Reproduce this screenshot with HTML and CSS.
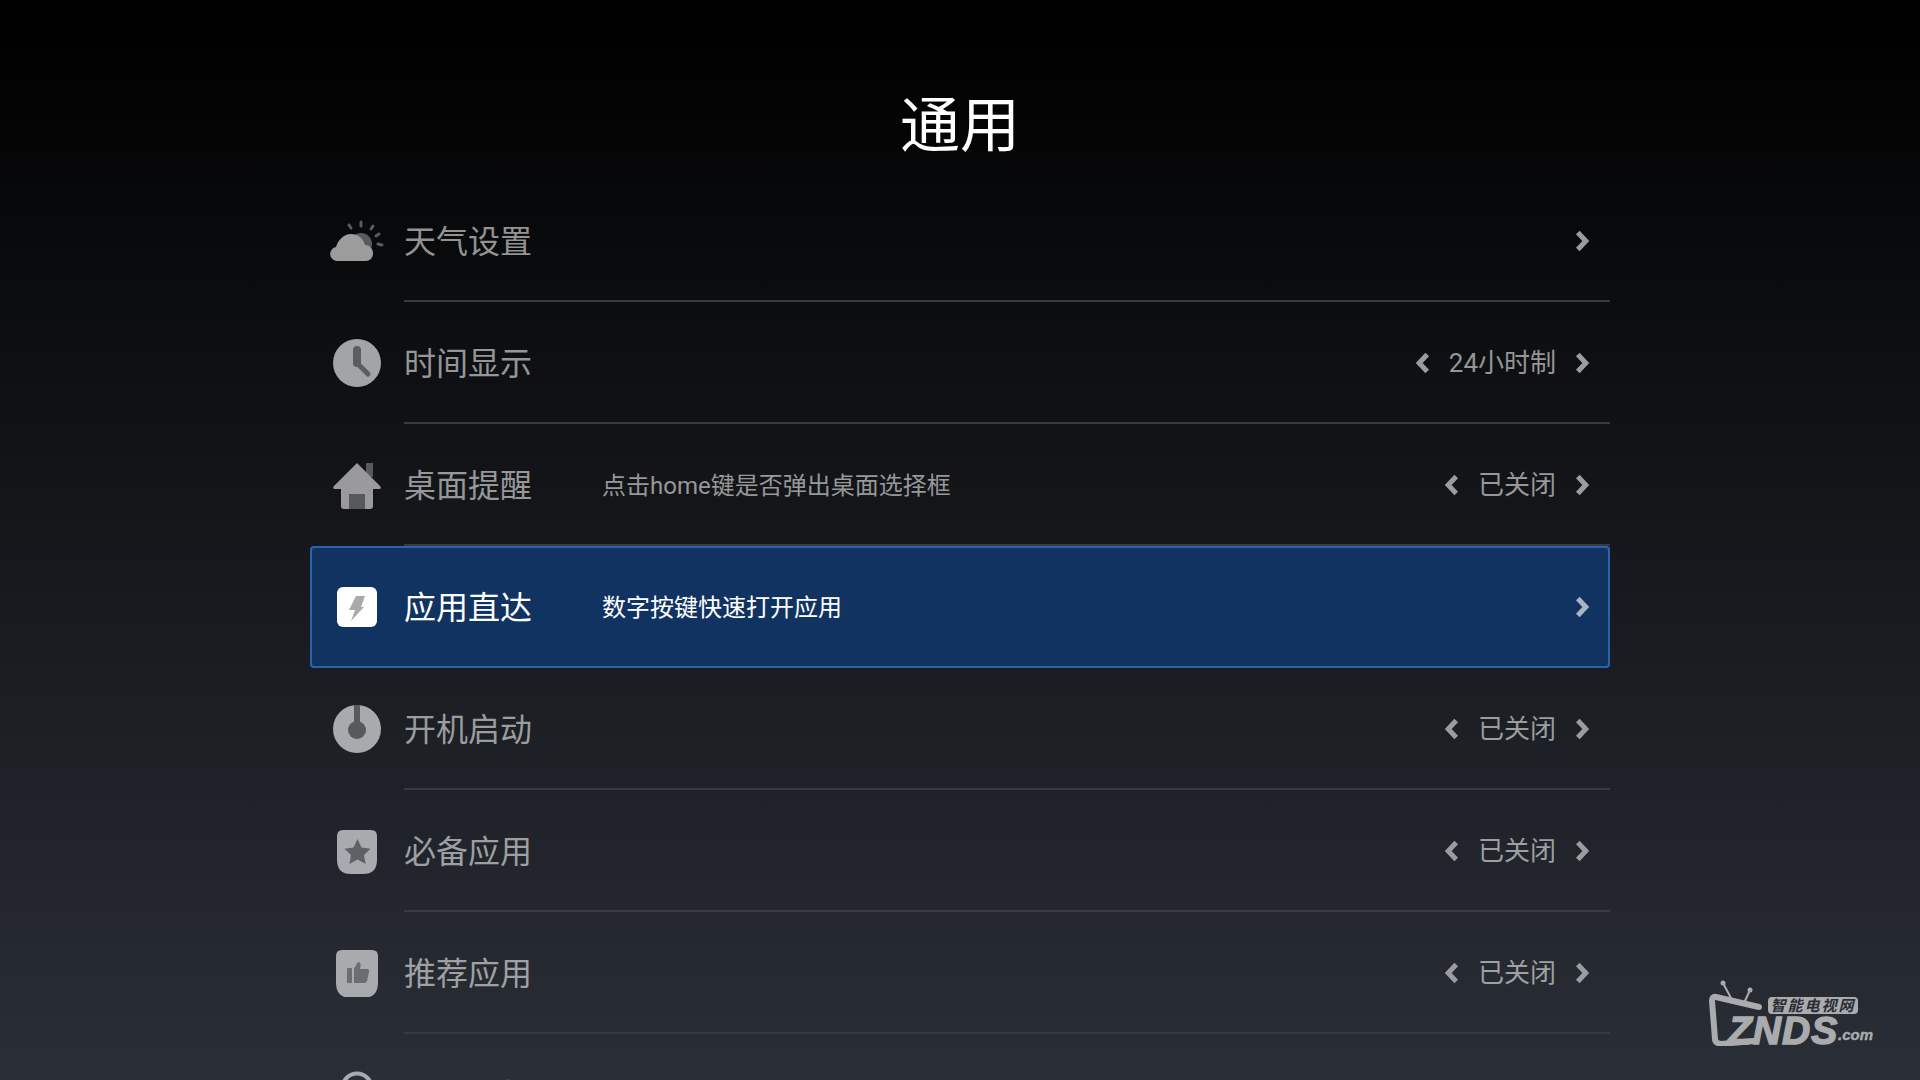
FILE: index.html
```html
<!DOCTYPE html>
<html lang="zh-CN">
<head>
  <meta charset="UTF-8">
  <title>通用</title>
  <link rel="stylesheet" href="styles.css">
</head>
<body>

<div class="screen">
  <h1 class="title">通用</h1>

  <ul class="list">
    <!-- 天气设置 -->
    <li class="row">
      <span class="row-icon">
        <svg width="56" height="48" viewBox="0 0 56 48">
          <g stroke="#5a5b5c" stroke-width="3" stroke-linecap="round">
            <line x1="20" y1="8" x2="22" y2="11"/>
            <line x1="32" y1="5" x2="32" y2="9"/>
            <line x1="44" y1="9" x2="42" y2="12"/>
            <line x1="50" y1="17" x2="47" y2="19"/>
            <line x1="53" y1="28" x2="49" y2="27"/>
          </g>
          <circle cx="32" cy="27" r="11" fill="#58595a"/>
          <path fill="#9c9c9c" d="M8 44a7 7 0 0 1-1-13.9C9 23 15 17 22 17c7 0 12 4 14 11 5 0 8 4 8 8.5 0 4-3 7.5-7 7.5z"/>
        </svg>
      </span>
      <div class="row-body">
        <span class="label">天气设置</span>
        <span class="value">
          <svg class="chev" width="14" height="22" viewBox="0 0 14 22"><path d="M2.800 2.500l8 8.500-8 8.500"/></svg>
        </span>
      </div>
    </li>

    <!-- 时间显示 -->
    <li class="row">
      <span class="row-icon">
        <svg width="48" height="48" viewBox="0 0 48 48">
          <circle cx="24" cy="24" r="24" fill="#a3a4a6"/>
          <path d="M24 11v13" stroke="#5c5d5f" stroke-width="8" stroke-linecap="round"/>
          <path d="M23 23l12 12" stroke="#5c5d5f" stroke-width="5" stroke-linecap="round"/>
        </svg>
      </span>
      <div class="row-body">
        <span class="label">时间显示</span>
        <span class="value">
          <svg class="chev" width="14" height="22" viewBox="0 0 14 22"><path d="M11.200 2.500l-8 8.500 8 8.500"/></svg>
          <span>24小时制</span>
          <svg class="chev" width="14" height="22" viewBox="0 0 14 22"><path d="M2.800 2.500l8 8.500-8 8.500"/></svg>
        </span>
      </div>
    </li>

    <!-- 桌面提醒 -->
    <li class="row">
      <span class="row-icon">
        <svg width="48" height="48" viewBox="0 0 48 48">
          <rect x="33" y="2" width="7" height="14" fill="#58595b"/>
          <path fill="#9a9a9c" d="M24 2L1 25q-2 3 1 3h6v17q0 3 3 3h26q3 0 3-3V28h6q3 0 1-3z"/>
          <rect x="16" y="33" width="16" height="15" fill="#58595b"/>
        </svg>
      </span>
      <div class="row-body">
        <span class="label">桌面提醒</span>
        <span class="desc">点击home键是否弹出桌面选择框</span>
        <span class="value">
          <svg class="chev" width="14" height="22" viewBox="0 0 14 22"><path d="M11.200 2.500l-8 8.500 8 8.500"/></svg>
          <span>已关闭</span>
          <svg class="chev" width="14" height="22" viewBox="0 0 14 22"><path d="M2.800 2.500l8 8.500-8 8.500"/></svg>
        </span>
      </div>
    </li>

    <!-- 应用直达 -->
    <li class="row active">
      <span class="row-icon">
        <svg width="48" height="48" viewBox="0 0 48 48">
          <rect x="4" y="4" width="40" height="40" rx="6" fill="#fff"/>
          <path fill="#a9a9a9" d="M23 13h9l-4 11h3L18 38l4-11h-6z"/>
        </svg>
      </span>
      <div class="row-body">
        <span class="label">应用直达</span>
        <span class="desc">数字按键快速打开应用</span>
        <span class="value">
          <svg class="chev" width="14" height="22" viewBox="0 0 14 22"><path d="M2.800 2.500l8 8.500-8 8.500"/></svg>
        </span>
      </div>
    </li>

    <!-- 开机启动 -->
    <li class="row">
      <span class="row-icon">
        <svg width="48" height="48" viewBox="0 0 48 48">
          <circle cx="24" cy="24" r="24" fill="#a8aaad"/>
          <rect x="21" y="0" width="6" height="24" fill="#57595d"/>
          <circle cx="24" cy="25" r="9" fill="#57595d"/>
        </svg>
      </span>
      <div class="row-body">
        <span class="label">开机启动</span>
        <span class="value">
          <svg class="chev" width="14" height="22" viewBox="0 0 14 22"><path d="M11.200 2.500l-8 8.500 8 8.500"/></svg>
          <span>已关闭</span>
          <svg class="chev" width="14" height="22" viewBox="0 0 14 22"><path d="M2.800 2.500l8 8.500-8 8.500"/></svg>
        </span>
      </div>
    </li>

    <!-- 必备应用 -->
    <li class="row">
      <span class="row-icon">
        <svg width="48" height="48" viewBox="0 0 48 48">
          <path fill="#a8aaad" d="M10 3h28q6 0 6 6v24q0 14-14 14H18Q4 47 4 33V9q0-6 6-6z"/>
          <path fill="#5e6266" d="M24.500 12l4 8.500 9 1.200-6.500 6.300 1.700 9-8.200-4.400-8.200 4.400 1.700-9-6.500-6.300 9-1.200z"/>
        </svg>
      </span>
      <div class="row-body">
        <span class="label">必备应用</span>
        <span class="value">
          <svg class="chev" width="14" height="22" viewBox="0 0 14 22"><path d="M11.200 2.500l-8 8.500 8 8.500"/></svg>
          <span>已关闭</span>
          <svg class="chev" width="14" height="22" viewBox="0 0 14 22"><path d="M2.800 2.500l8 8.500-8 8.500"/></svg>
        </span>
      </div>
    </li>

    <!-- 推荐应用 -->
    <li class="row">
      <span class="row-icon">
        <svg width="48" height="48" viewBox="0 0 48 48">
          <path fill="#a8aaad" d="M9 1h30q6 0 6 6v27q0 15-15 15H18Q3 49 3 34V7q0-6 6-6z"/>
          <rect x="14" y="19" width="5" height="15" rx="1" fill="#6a6d72"/>
          <path fill="#6a6d72" d="M21 19.500L25 13q3 0 2.500 4L27 20h7q2.500 0 2 3l-2 9q-.5 2-3 2H21z"/>
        </svg>
      </span>
      <div class="row-body">
        <span class="label">推荐应用</span>
        <span class="value">
          <svg class="chev" width="14" height="22" viewBox="0 0 14 22"><path d="M11.200 2.500l-8 8.500 8 8.500"/></svg>
          <span>已关闭</span>
          <svg class="chev" width="14" height="22" viewBox="0 0 14 22"><path d="M2.800 2.500l8 8.500-8 8.500"/></svg>
        </span>
      </div>
    </li>

    <!-- 屏幕外只露出一点 -->
    <li class="row">
      <span class="row-icon">
        <svg width="48" height="48" viewBox="0 0 48 48">
          <circle cx="24" cy="17" r="14.500" fill="none" stroke="#a8aaad" stroke-width="4"/>
        </svg>
      </span>
      <div class="row-body">
        <span class="label">定时关机</span>
      </div>
    </li>
  </ul>

  <!-- 水印 -->
  <div class="logo">
    <svg class="logo-tv" width="60" height="66" viewBox="0 0 60 66">
      <g fill="none" stroke="#a9abad" stroke-linecap="round">
        <path d="M14 3l9 17" stroke-width="2"/>
        <path d="M41 10l-5 11" stroke-width="2"/>
        <path d="M50 27L7 17Q3 16 3 21l3 38q0 4 6 5l32-3" stroke-width="6"/>
      </g>
      <circle cx="14" cy="3" r="2.500" fill="#a9abad"/>
      <circle cx="41" cy="10" r="2.500" fill="#a9abad"/>
    </svg>
    <span class="logo-tag">智能电视网</span>
    <span class="logo-name">ZNDS</span>
    <span class="logo-com">.com</span>
  </div>
</div>

</body>
</html>
```

FILE: styles.css
```css
/* Общий стиль */
html, body {
  margin: 0;
  padding: 0;
}

body {
  font-family: Roboto, "Noto Sans CJK SC", sans-serif;
  background-color: #000;
}

.screen {
  position: relative;
  width: 1920px;
  height: 1080px;
  overflow: hidden;
  background: linear-gradient(180deg, #000 0%, #000 2%, #14161a 48%, #2a2e36 100%);
}

.title {
  margin: 0;
  padding: 86px 0 12px;
  font-size: 60px;
  font-weight: 400;
  line-height: 82px;
  text-align: center;
  color: #fff;
}

/* Список */
.list {
  list-style: none;
  width: 1300px;
  margin: 0 auto;
  padding: 0;
}

.row {
  display: flex;
  height: 122px;
  color: rgba(255, 255, 255, 0.56);
}

.row-icon {
  display: flex;
  flex: 0 0 94px;
  align-items: center;
  justify-content: center;
  height: 118px;
  padding-top: 2px;
}

.row-body {
  display: flex;
  flex: 1;
  align-items: center;
  height: 116px;
  padding-top: 4px;
  border-bottom: 2px solid #393a3e;
}

.label {
  font-size: 32px;
  line-height: 44px;
}

.desc {
  margin-left: 70px;
  font-size: 24px;
  line-height: 34px;
}

.value {
  display: flex;
  align-items: center;
  gap: 19px;
  margin-top: -2px;
  margin-left: auto;
  padding-right: 21px;
  font-size: 26px;
  line-height: 36px;
}

.chev {
  display: block;
}

.chev path {
  fill: none;
  stroke: #9a9c9f;
  stroke-width: 5;
}

/* Выбранная строка */
.row.active {
  background-color: #113362;
  border-radius: 4px;
  box-shadow: inset 0 0 0 2px #2a62ad;
  color: #fff;
}

.row.active .row-body {
  border-bottom-color: transparent;
}

.row.active .chev path {
  stroke: #a9b4c4;
}

/* Водяной знак */
.logo {
  position: absolute;
  left: 1709px;
  top: 980px;
  width: 170px;
  height: 68px;
  color: #a9abad;
  font-family: "Liberation Sans", "Noto Sans CJK SC", sans-serif;
  font-style: italic;
  font-weight: 700;
}

.logo-tv {
  position: absolute;
  left: 0;
  top: 0;
}

.logo-tag {
  position: absolute;
  left: 59px;
  top: 17px;
  width: 90px;
  height: 17px;
  border-radius: 4px;
  background-color: #a9abad;
  color: #2a2d34;
  font-size: 15px;
  letter-spacing: 2px;
  line-height: 17px;
  text-align: center;
}

.logo-name {
  position: absolute;
  left: 19px;
  top: 37px;
  font-size: 39px;
  line-height: 28px;
  letter-spacing: 1px;
  -webkit-text-stroke: 1.5px #a9abad;
}

.logo-com {
  position: absolute;
  left: 129px;
  top: 46px;
  font-size: 15px;
  line-height: 18px;
  -webkit-text-stroke: 0.4px #a9abad;
}
```
